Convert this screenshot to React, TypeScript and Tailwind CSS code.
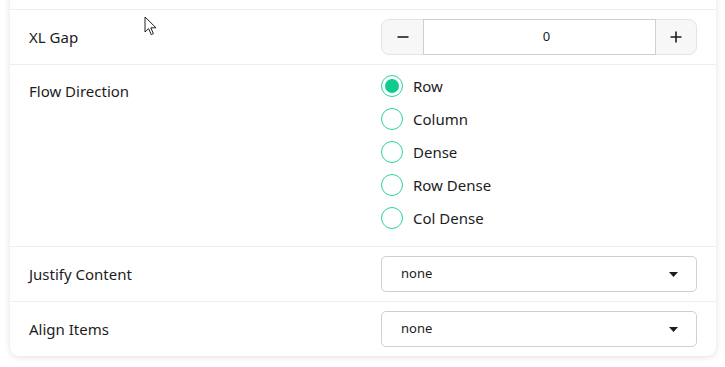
import React, { useState } from "react";

const flowOptions = ["Row", "Column", "Dense", "Row Dense", "Col Dense"];

function Stepper({ value }: { value?: number }) {
  return (
    <div className="flex h-[36px] w-[316px] rounded-[8px] border border-[#e4e4e4] bg-[#f7f7f7]">
      <button className="flex w-[41px] items-center justify-center text-[#1c1c1c]">
        <svg width="14" height="14" viewBox="0 0 14 14">
          <path d="M1.5 7h11" stroke="currentColor" strokeWidth="1.6" />
        </svg>
      </button>
      <div className="-my-px flex flex-1 items-center justify-center border border-[#cfcfcf] bg-white pl-[14px] text-[13px] text-[#1c1c1c]">
        {value}
      </div>
      <button className="flex w-[40px] items-center justify-center text-[#1c1c1c]">
        <svg width="14" height="14" viewBox="0 0 14 14">
          <path d="M1.5 7h11M7 1.5v11" stroke="currentColor" strokeWidth="1.6" />
        </svg>
      </button>
    </div>
  );
}

function Select({ value }: { value: string }) {
  return (
    <div className="flex h-[36px] w-[316px] items-center justify-between rounded-[5px] border border-[#cfcfcf] bg-white pl-[19px] pr-[18px] text-[13px] text-[#1c1c1c]">
      <span>{value}</span>
      <svg width="9" height="5" viewBox="0 0 9 5">
        <path d="M0 0h9L4.5 5z" fill="#1c1c1c" />
      </svg>
    </div>
  );
}

function Row({
  label,
  children,
  top,
}: {
  label: string;
  children: React.ReactNode;
  top?: boolean;
}) {
  return (
    <div
      className={`flex items-center justify-between px-[19px] py-[9px] ${
        top ? "" : "border-t border-[#eeeeee]"
      }`}
    >
      <div className="text-[15px] text-[#1c1c1c]">{label}</div>
      {children}
    </div>
  );
}

export default function App() {
  const [flow, setFlow] = useState("Row");

  return (
    <div
      className="relative h-[367px] overflow-hidden bg-white"
      style={{ fontFamily: '"Noto Sans", "Open Sans", sans-serif' }}
    >
      <div className="-mt-[45px] ml-[10px] mr-[9px] overflow-hidden rounded-[9px] bg-white shadow-[0_1px_6px_rgba(0,0,0,0.13)]">
        {/* previous setting, scrolled mostly out of view */}
        <Row label="" top>
          <Stepper />
        </Row>
        <Row label="XL Gap">
          <Stepper value={0} />
        </Row>

        <div className="flex justify-between border-t border-[#eeeeee] px-[19px] pt-[10px] pb-[17px]">
          <div className="pt-[7px] text-[15px] leading-[18px] text-[#1c1c1c]">
            Flow Direction
          </div>
          <div className="flex w-[316px] flex-col gap-[11px]">
            {flowOptions.map((opt) => (
              <label
                key={opt}
                className="flex cursor-pointer items-center gap-[10px] text-[15px] text-[#1c1c1c]"
                onClick={() => setFlow(opt)}
              >
                <span className="flex h-[22px] w-[22px] items-center justify-center rounded-full border-[1.5px] border-[#2bd3a0] bg-white">
                  {flow === opt && (
                    <span className="h-[14px] w-[14px] rounded-full bg-[#10cb8e]" />
                  )}
                </span>
                <span className="leading-[22px]">{opt}</span>
              </label>
            ))}
          </div>
        </div>

        <Row label="Justify Content">
          <Select value="none" />
        </Row>
        <Row label="Align Items">
          <Select value="none" />
        </Row>
      </div>

      {/* mouse pointer */}
      <svg
        className="absolute left-[144px] top-[16px]"
        width="14"
        height="20"
        viewBox="0 0 14 20"
      >
        <path
          d="M1 1v15l3.6-3.4 2.6 6 2.2-1-2.6-5.8H12z"
          fill="white"
          stroke="#222"
          strokeWidth="1"
          strokeLinejoin="round"
        />
      </svg>
    </div>
  );
}
